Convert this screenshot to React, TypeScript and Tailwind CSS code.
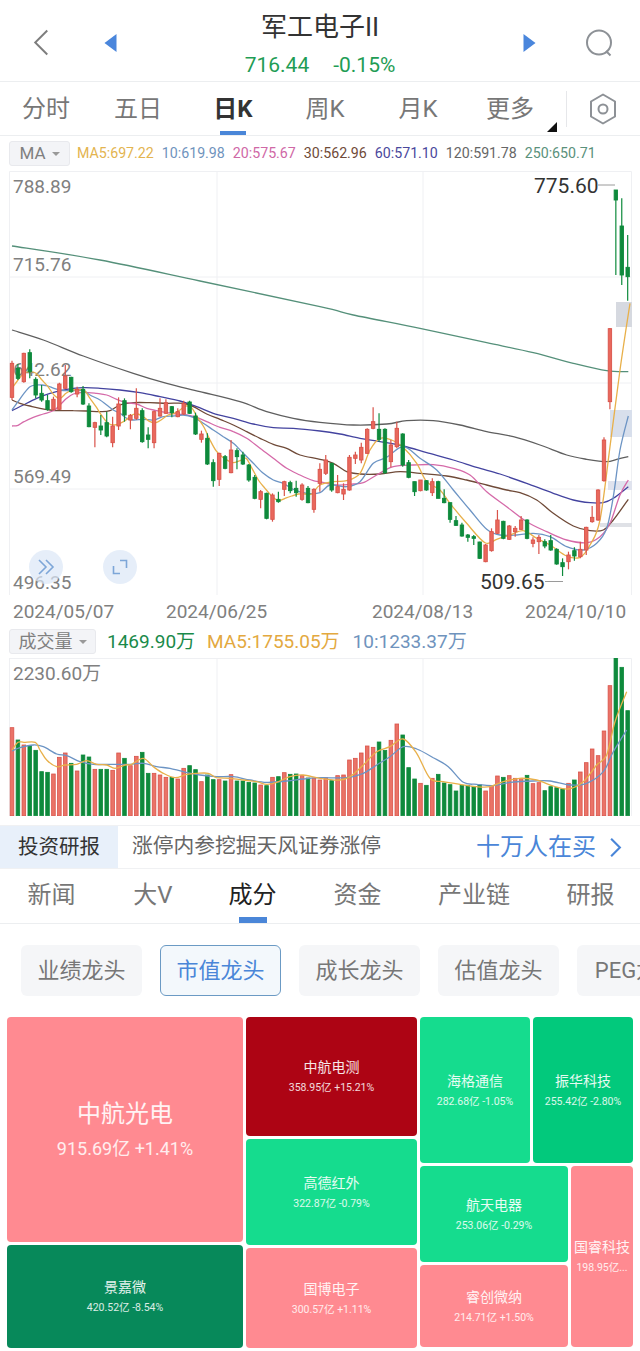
import React from "react";

type Candle = [string, number, number, number, number];
type Tile = { name: string; sub: string; bg: string; className: string };

// candle values are read off the 3x crops: colour, wick top, body top, body bottom, wick bottom
const leftCandles: Candle[] = [
  ["r", 62, 70, 172, 180], ["g", 72, 85, 115, 120], ["r", 38, 40, 125, 128], ["g", 28, 38, 95, 115],
  ["g", 112, 118, 165, 175], ["g", 135, 160, 180, 185], ["g", 165, 182, 208, 212], ["r", 170, 178, 208, 212],
  ["r", 128, 132, 208, 210], ["r", 75, 108, 145, 148], ["g", 110, 112, 155, 158], ["r", 140, 148, 162, 172],
  ["g", 138, 148, 192, 195], ["g", 190, 198, 260, 262], ["r", 245, 248, 262, 322], ["g", 225, 258, 270, 285],
  ["g", 215, 248, 288, 292], ["r", 230, 258, 308, 322], ["r", 172, 192, 258, 270], ["g", 175, 182, 225, 245],
  ["r", 222, 226, 240, 268], ["r", 145, 205, 235, 240], ["g", 205, 212, 305, 308], ["g", 262, 285, 298, 325],
  ["r", 212, 215, 308, 325], ["r", 175, 205, 228, 230], ["r", 178, 188, 220, 222], ["g", 198, 200, 218, 232],
  ["r", 205, 215, 230, 232], ["r", 182, 190, 222, 225], ["g", 182, 186, 220, 222], ["g", 218, 228, 282, 285],
  ["r", 272, 282, 298, 308], ["g", 280, 295, 372, 375], ["g", 358, 368, 422, 440], ["r", 338, 340, 418, 438],
  ["g", 345, 350, 385, 388], ["r", 300, 330, 398, 400], ["g", 325, 332, 350, 388], ["g", 335, 345, 372, 375],
  ["g", 372, 375, 420, 425], ["g", 405, 412, 475, 478], ["r", 450, 455, 478, 505], ["g", 458, 460, 535, 538],
  ["r", 460, 465, 538, 545], ["g", 455, 478, 485, 488], ["r", 422, 425, 448, 468], ["g", 422, 428, 452, 460],
  ["g", 422, 445, 458, 470], ["r", 430, 435, 478, 482], ["g", 438, 445, 488, 490], ["r", 445, 448, 508, 518],
];

const rightCandles: Candle[] = [
  ["r", 880, 898, 940, 965], ["r", 855, 870, 910, 915], ["g", 878, 880, 960, 965], ["r", 915, 950, 968, 970],
  ["r", 940, 958, 972, 990], ["r", 855, 862, 960, 962], ["r", 845, 855, 865, 882], ["r", 818, 832, 870, 880],
  ["r", 775, 778, 850, 852], ["r", 712, 755, 775, 778], ["g", 730, 778, 808, 815], ["g", 775, 778, 908, 912],
  ["r", 810, 825, 875, 892], ["r", 755, 775, 830, 835], ["g", 790, 792, 885, 890], ["g", 870, 878, 922, 925],
  ["g", 935, 935, 965, 978], ["r", 930, 930, 962, 964], ["g", 930, 932, 960, 962], ["r", 925, 935, 968, 978],
  ["g", 932, 935, 985, 985], ["g", 958, 985, 998, 1000], ["g", 998, 998, 1048, 1058], ["g", 1038, 1052, 1066, 1068],
  ["g", 1058, 1065, 1098, 1100], ["g", 1092, 1095, 1102, 1115], ["g", 1095, 1100, 1105, 1125], ["g", 1115, 1116, 1165, 1167],
  ["r", 1122, 1125, 1175, 1177], ["r", 1075, 1085, 1142, 1145], ["r", 1020, 1050, 1090, 1092], ["g", 1052, 1054, 1105, 1108],
  ["r", 1065, 1068, 1108, 1110], ["r", 1068, 1075, 1085, 1100], ["r", 1038, 1050, 1078, 1080], ["g", 1048, 1050, 1105, 1108],
  ["r", 1102, 1110, 1120, 1132], ["r", 1095, 1102, 1115, 1152], ["g", 1108, 1115, 1128, 1135], ["g", 1095, 1112, 1140, 1142],
  ["g", 1135, 1138, 1182, 1184], ["g", 1165, 1178, 1190, 1218], ["r", 1145, 1155, 1175, 1198], ["g", 1132, 1142, 1158, 1172],
  ["r", 1115, 1138, 1160, 1165], ["r", 1070, 1072, 1140, 1155], ["r", 1008, 1042, 1055, 1058], ["r", 958, 960, 1050, 1052],
  ["r", 802, 810, 932, 935], ["r", 475, 476, 695, 718], ["g", 60, 60, 90, 315], ["g", 85, 168, 315, 345],
  ["g", 195, 292, 320, 392],
];

const candleX = (i: number) => 12 + i * 5.92;

// left crop starts at y=340, right crop at x=320 y=170, all at 3x
const fromLeft = (pts: number[][]) => pts.map(([x, y]) => [x / 3, 340 + y / 3]);
const fromRight = (pts: number[][]) => pts.map(([x, y]) => [320 + x / 3, 170 + y / 3]);
const fromVolLeft = (pts: number[][]) => pts.map(([x, y]) => [x / 3, 625 + y / 3]);
const fromVolRight = (pts: number[][]) => pts.map(([x, y]) => [320 + x / 3, 625 + y / 3]);

const priceLines: { color: string; pts: number[][] }[] = [
  {
    color: "#55907a",
    pts: [[12, 246], [100, 260], [200, 281], ...fromRight([[0, 410], [100, 435], [300, 475], [500, 518], [640, 548], [760, 580], [860, 602], [925, 605]])],
  },
  {
    color: "#5f5f5f",
    pts: [[12, 330], ...fromLeft([[130, 0], [250, 48], [400, 100], [500, 130], [600, 155], [720, 185], [800, 215], [880, 235]]),
      ...fromRight([[0, 757], [100, 765], [200, 762], [260, 752], [340, 752], [420, 765], [500, 785], [580, 800], [660, 825], [740, 855], [800, 868], [860, 875], [890, 868], [925, 860]])],
  },
  {
    color: "#43439f",
    pts: [...fromLeft([[36, 212], [70, 195], [110, 175], [150, 160], [200, 148], [250, 143], [300, 145], [360, 150], [420, 158], [480, 170], [540, 183], [590, 200], [640, 220], [700, 235], [760, 252], [820, 263], [880, 265]]),
      ...fromRight([[0, 783], [60, 792], [120, 805], [180, 815], [250, 828], [320, 848], [400, 870], [470, 892], [540, 912], [620, 940], [700, 970], [760, 990], [810, 998], [850, 998], [880, 985], [925, 950]])],
  },
  {
    color: "#6f4a38",
    pts: [...fromLeft([[36, 180], [60, 190], [90, 198], [120, 205], [150, 210], [180, 212], [220, 212], [260, 213], [300, 215], [330, 212], [360, 195], [400, 188], [450, 188], [500, 190], [550, 190], [580, 200], [620, 222], [660, 238], [700, 255], [740, 275], [780, 295], [820, 313], [860, 325], [900, 345]]),
      ...fromRight([[0, 868], [40, 880], [80, 905], [120, 912], [180, 912], [240, 905], [300, 910], [380, 918], [440, 930], [500, 945], [560, 960], [600, 968], [650, 990], [700, 1030], [760, 1068], [810, 1082], [850, 1080], [880, 1050], [925, 988]])],
  },
  {
    color: "#d56aa9",
    pts: [...fromLeft([[36, 258], [54, 256], [72, 245], [100, 232], [130, 222], [160, 212], [180, 195], [200, 175], [220, 162], [250, 157], [290, 160], [320, 165], [350, 178], [380, 188], [410, 192], [440, 205], [470, 212], [500, 218], [530, 222], [560, 225], [590, 232], [620, 245], [660, 262], [700, 275], [740, 295], [780, 325], [820, 355], [860, 385], [900, 405], [940, 422]]),
      ...fromRight([[0, 935], [50, 945], [100, 942], [130, 938], [170, 915], [220, 890], [280, 885], [340, 884], [400, 895], [450, 915], [500, 965], [560, 1010], [620, 1055], [680, 1085], [740, 1110], [800, 1118], [840, 1100], [870, 1060], [900, 975], [925, 930]])],
  },
  {
    color: "#6c94c4",
    pts: [...fromLeft([[36, 210], [54, 185], [72, 160], [90, 140], [108, 135], [126, 135], [144, 138], [162, 145], [180, 150], [200, 152], [220, 152], [250, 152], [270, 165], [300, 180], [320, 195], [340, 210], [360, 220], [380, 235], [400, 240], [430, 238], [460, 240], [490, 230], [520, 228], [550, 225], [580, 232], [610, 250], [640, 270], [670, 290], [700, 310], [730, 340], [760, 370], [790, 400], [820, 420], [850, 430], [880, 448], [920, 460]]),
      ...fromRight([[0, 968], [30, 945], [80, 950], [120, 935], [160, 880], [200, 862], [250, 830], [300, 865], [350, 900], [400, 960], [450, 1020], [500, 1078], [540, 1095], [590, 1095], [640, 1090], [690, 1100], [740, 1130], [790, 1140], [830, 1120], [860, 1075], [880, 980], [900, 840], [925, 738]])],
  },
  {
    color: "#e8b04a",
    pts: [...fromLeft([[36, 145], [54, 120], [72, 100], [90, 95], [108, 100], [126, 120], [144, 140], [162, 165], [180, 175], [198, 160], [216, 150], [234, 150], [252, 150], [270, 175], [288, 200], [306, 228], [324, 250], [342, 255], [360, 250], [378, 240], [396, 225], [414, 222], [432, 232], [450, 245], [468, 248], [486, 238], [504, 225], [522, 220], [540, 210], [558, 198], [576, 205], [594, 235], [612, 262], [630, 300], [648, 332], [666, 350], [684, 362], [700, 368], [720, 362], [738, 355], [756, 385], [775, 420], [795, 445], [815, 468], [835, 482], [855, 475], [875, 468], [895, 462], [915, 462], [935, 462]]),
      ...fromRight([[0, 945], [40, 935], [80, 932], [120, 910], [150, 840], [180, 805], [215, 810], [248, 830], [290, 880], [320, 935], [360, 960], [390, 1000], [440, 1060], [495, 1118], [530, 1108], [570, 1095], [610, 1082], [650, 1105], [690, 1125], [740, 1158], [780, 1162], [810, 1125], [840, 1050], [870, 830], [900, 600], [930, 400]])],
  },
];

const volumes: [string, number][] = [
  ["r", 308], ["g", 345], ["r", 360], ["g", 362], ["g", 376], ["g", 440], ["g", 442], ["r", 447], ["r", 397], ["r", 384],
  ["g", 415], ["r", 438], ["g", 390], ["g", 396], ["r", 433], ["g", 433], ["g", 433], ["r", 436], ["r", 384], ["g", 400],
  ["r", 422], ["r", 394], ["g", 382], ["g", 445], ["r", 445], ["r", 450], ["r", 457], ["g", 457], ["r", 462], ["r", 430],
  ["g", 422], ["g", 434], ["r", 470], ["g", 450], ["g", 464], ["r", 464], ["g", 468], ["r", 449], ["g", 468], ["g", 468],
  ["g", 472], ["g", 474], ["r", 480], ["g", 482], ["r", 457], ["g", 455], ["r", 443], ["g", 448], ["g", 447], ["r", 452],
  ["g", 459], ["r", 460], ["r", 465], ["r", 458], ["g", 467], ["r", 452], ["r", 450], ["r", 405], ["r", 400], ["r", 384],
  ["r", 363], ["r", 367], ["g", 351], ["g", 376], ["r", 346], ["r", 297], ["g", 330], ["g", 428], ["g", 462], ["r", 475],
  ["g", 481], ["r", 460], ["g", 448], ["g", 474], ["g", 479], ["g", 498], ["g", 481], ["g", 481], ["g", 484], ["g", 479],
  ["r", 498], ["r", 484], ["r", 453], ["g", 457], ["r", 452], ["r", 460], ["r", 460], ["g", 451], ["r", 476], ["r", 473],
  ["g", 497], ["g", 485], ["g", 488], ["g", 492], ["r", 475], ["g", 465], ["r", 441], ["r", 413], ["r", 372], ["r", 392],
  ["r", 318], ["r", 182], ["g", 97], ["g", 127], ["g", 257],
];

const volumeLines = [
  {
    color: "#6c94c4",
    pts: [...fromVolLeft([[36, 378], [60, 368], [100, 360], [130, 365], [170, 387], [200, 392], [240, 410], [280, 418], [340, 418], [390, 418], [430, 415], [470, 425], [510, 430], [550, 440], [600, 450], [650, 455], [700, 455], [750, 465], [800, 472], [860, 468], [910, 462]]),
      ...fromVolRight([[0, 458], [80, 458], [130, 445], [170, 420], [210, 395], [250, 365], [290, 372], [340, 398], [385, 425], [430, 472], [470, 478], [520, 482], [570, 472], [640, 468], [690, 468], [750, 480], [800, 475], [850, 440], [880, 380], [920, 315]])],
  },
  {
    color: "#e8b04a",
    pts: [...fromVolLeft([[36, 375], [54, 352], [72, 352], [106, 352], [120, 375], [140, 405], [170, 425], [195, 420], [230, 418], [260, 407], [290, 418], [320, 420], [345, 430], [375, 420], [395, 418], [430, 400], [460, 425], [490, 445], [525, 458], [560, 448], [590, 445], [625, 445], [650, 458], [690, 460], [730, 465], [770, 470], [800, 478], [830, 472], [870, 455], [910, 450]]),
      ...fromVolRight([[0, 460], [60, 465], [90, 455], [130, 420], [170, 380], [210, 365], [250, 342], [290, 385], [330, 460], [370, 470], [420, 478], [470, 485], [510, 485], [550, 470], [600, 460], [650, 465], [700, 483], [745, 492], [790, 470], [830, 420], [860, 390], [885, 290], [920, 200]])],
  },
];

const topTabs = [
  { text: "分时", className: "w-[92px]" },
  { text: "五日", className: "w-[92px]" },
  { text: "日K", className: "w-[98px]" },
  { text: "周K", className: "w-[86px]" },
  { text: "月K", className: "w-[100px]" },
  { text: "更多", className: "w-[84px]" },
];
const maValues = [
  { text: "MA5:697.22", className: "text-[#e3b44f]" },
  { text: "10:619.98", className: "text-[#6f93bd]" },
  { text: "20:575.67", className: "text-[#cf68a6]" },
  { text: "30:562.96", className: "text-[#6f4a38]" },
  { text: "60:571.10", className: "text-[#4a479c]" },
  { text: "120:591.78", className: "text-[#666666]" },
  { text: "250:650.71", className: "text-[#5a917b]" },
];
const infoTabs = [
  { text: "新闻", className: "w-[47px] ml-[28px]" },
  { text: "大V", className: "w-[40px] ml-[58px]" },
  { text: "成分", className: "w-[47px] ml-[56px]" },
  { text: "资金", className: "w-[47px] ml-[58px]" },
  { text: "产业链", className: "w-[72px] ml-[57px]" },
  { text: "研报", className: "w-[47px] ml-[57px]" },
];
const pills = ["业绩龙头", "市值龙头", "成长龙头", "估值龙头"];

const PINK = "bg-[#ff8a91]";
const GREEN = "bg-[#15dc8e]";

function smoothPath(pts: number[][]) {
  let d = `M${pts[0][0].toFixed(1)} ${pts[0][1].toFixed(1)}`;
  for (let i = 0; i < pts.length - 1; i++) {
    const p0 = pts[Math.max(i - 1, 0)];
    const p1 = pts[i];
    const p2 = pts[i + 1];
    const p3 = pts[Math.min(i + 2, pts.length - 1)];
    const c1x = p1[0] + (p2[0] - p0[0]) / 6;
    const c1y = p1[1] + (p2[1] - p0[1]) / 6;
    const c2x = p2[0] - (p3[0] - p1[0]) / 6;
    const c2y = p2[1] - (p3[1] - p1[1]) / 6;
    d += `C${c1x.toFixed(1)} ${c1y.toFixed(1)} ${c2x.toFixed(1)} ${c2y.toFixed(1)} ${p2[0].toFixed(1)} ${p2[1].toFixed(1)}`;
  }
  return d;
}

function PriceChart() {
  return (
    <svg viewBox="0 171 640 424" className="relative block h-[424px] w-[640px]" fill="none">
      <path d="M9.5 171.5H631.5V595.5H9.5ZM9.5 277H631.5M9.5 383H631.5M9.5 489H631.5M217 171V595M423 171V595" stroke="#eff0f3" />
      <rect x="616" y="302" width="16" height="25" fill="#d6d9e0" />
      <rect x="610" y="410" width="22" height="27" fill="#d8dfec" />
      <rect x="608" y="481" width="24" height="9" fill="#e0e3ee" />
      <rect x="600" y="523" width="32" height="4" fill="#dfe1e6" />
      {priceLines.map((line) => (
        <path key={line.color} d={smoothPath(line.pts)} stroke={line.color} strokeWidth="1.3" />
      ))}
      {leftCandles.concat(rightCandles).map(([c, wt, bt, bb, wb], i) => {
        const x = candleX(i);
        const base = i < leftCandles.length ? 340 : 170;
        const y = (v: number) => base + v / 3;
        const stroke = c === "r" ? "#d9534a" : "#0e8a3c";
        const fill = c === "r" ? "#e9685c" : "#0e8a3c";
        return (
          <g key={i}>
            <line x1={x} x2={x} y1={y(wt)} y2={y(wb)} stroke={stroke} strokeWidth="1.2" />
            <rect x={x - 1.7} y={y(bt)} width="3.4" height={Math.max(y(bb) - y(bt), 1)} fill={fill} stroke={stroke} strokeWidth="0.9" />
          </g>
        );
      })}
      <path d="M598 185H615M545 581.5H563" stroke="#9a9a9a" />
    </svg>
  );
}

function VolumeChart() {
  return (
    <svg viewBox="0 658 640 158" className="relative block h-[158px] w-[640px]" fill="none">
      <path d="M9.5 658.5H631.5V816M9.5 658V816M217 658V816M423 658V816" stroke="#eff0f3" />
      {volumes.map(([c, top], i) => {
        const y = 625 + top / 3;
        return (
          <rect
            key={i}
            x={candleX(i) - 1.8}
            y={y}
            width="3.6"
            height={815.7 - y}
            fill={c === "r" ? "#ea7367" : "#0e8a3c"}
            stroke={c === "r" ? "#d9534a" : "#0e8a3c"}
            strokeWidth="0.8"
          />
        );
      })}
      {volumeLines.map((line) => (
        <path key={line.color} d={smoothPath(line.pts)} stroke={line.color} strokeWidth="1.3" />
      ))}
    </svg>
  );
}

function Header() {
  return (
    <div className="flex h-[82px] items-center border-b border-[#eceef0] pt-[4px]">
      <svg viewBox="0 0 16 28" className="ml-[33px] h-[27px] w-[16px]" fill="none">
        <path d="M14.5 1.5 2 14l12.5 12.5" stroke="#7d7d7d" strokeWidth="2" />
      </svg>
      <svg viewBox="0 0 12 18" className="ml-[55px] h-[18px] w-[13px]">
        <path d="M12 0v18L0 9z" fill="#4a86dc" />
      </svg>
      <div className="flex w-[406px] flex-col items-center">
        <div className="mt-[2px] text-[26px] leading-[34px] text-[#333333]">军工电子II</div>
        <div className="mt-[9px] flex gap-[24px] text-[21px] leading-[24px] text-[#1f9d55]">
          <span>716.44</span>
          <span>-0.15%</span>
        </div>
      </div>
      <svg viewBox="0 0 12 18" className="h-[18px] w-[13px]">
        <path d="M0 0v18L12 9z" fill="#4a86dc" />
      </svg>
      <svg viewBox="0 0 28 28" className="ml-[49px] h-[28px] w-[28px]" fill="none">
        <circle cx="14" cy="13.5" r="12" stroke="#8d9196" strokeWidth="2" />
        <path d="M21 22l4.5 4.5" stroke="#8d9196" strokeWidth="2" />
      </svg>
    </div>
  );
}

function PeriodTabs() {
  return (
    <div className="relative flex h-[54px] items-center border-b border-[#eceef0]">
      {topTabs.map((tab) => (
        <div
          key={tab.text}
          className={
            tab.text === "日K"
              ? `relative flex h-full items-center justify-center text-[24px] font-bold text-[#333333] ${tab.className}`
              : `flex h-full items-center justify-center text-[24px] text-[#777777] ${tab.className}`
          }
        >
          {tab.text}
          {tab.text === "日K" && <span className="absolute bottom-0 h-[4px] w-[26px] bg-[#4a86d8]" />}
        </div>
      ))}
      <svg viewBox="0 0 10 10" className="absolute left-[547px] top-[40px] h-[10px] w-[10px]">
        <path d="M10 0v10H0z" fill="#111111" />
      </svg>
      <div className="ml-[14px] h-[36px] w-px bg-[#e6e7ea]" />
      <svg viewBox="0 0 28 32" className="ml-[22px] h-[32px] w-[28px]" fill="none">
        <path d="M14 1.5 26 8.5v15L14 30.5 2 23.5v-15z" stroke="#8d9196" strokeWidth="2" strokeLinejoin="round" />
        <circle cx="14" cy="16" r="4.5" stroke="#8d9196" strokeWidth="2" />
      </svg>
    </div>
  );
}

function MaRow() {
  return (
    <div className="flex h-[35px] items-center pl-[9px]">
      <div className="flex h-[25px] w-[61px] items-center justify-center gap-[6px] rounded-[3px] border border-[#e8e9ed] bg-[#f3f4f7] text-[17px] text-[#808080]">
        MA
        <span className="h-0 w-0 border-x-[4px] border-t-[4px] border-x-transparent border-t-[#999999]" />
      </div>
      <div className="ml-[7px] flex gap-[8px] whitespace-nowrap text-[14.2px] leading-[25px]">
        {maValues.map((v) => (
          <span key={v.text} className={v.className}>
            {v.text}
          </span>
        ))}
      </div>
    </div>
  );
}

function CircleButton({ className, children }: { className: string; children: React.ReactNode }) {
  return (
    <div className={`absolute top-[379px] flex h-[34px] w-[34px] items-center justify-center rounded-full bg-[#dbe7f7]/70 ${className}`}>
      {children}
    </div>
  );
}

function TreeTile({ tile }: { tile: Tile }) {
  return (
    <div className={`flex flex-col items-center justify-center overflow-hidden rounded-[4px] ${tile.bg} ${tile.className}`}>
      <div className="whitespace-nowrap text-[14px] leading-[20px] text-white/90">{tile.name}</div>
      <div className="mt-[3px] whitespace-nowrap text-[10.5px] leading-[16px] text-white/85">{tile.sub}</div>
    </div>
  );
}

function TreeMap() {
  return (
    <div className="mt-[21px] flex gap-[3px] pl-[7px]">
      <div className="flex w-[236px] flex-col gap-[3px]">
        <div className={`flex h-[225px] flex-col items-center justify-center rounded-[4px] pb-[1px] ${PINK}`}>
          <div className="text-[24px] leading-[32px] text-white/90">中航光电</div>
          <div className="mt-[7px] text-[18px] leading-[24px] text-white/85">915.69亿 +1.41%</div>
        </div>
        <TreeTile tile={{ name: "景嘉微", sub: "420.52亿 -8.54%", bg: "bg-[#07895a]", className: "h-[103px]" }} />
      </div>
      <div className="flex w-[171px] flex-col gap-[3px]">
        <TreeTile tile={{ name: "中航电测", sub: "358.95亿 +15.21%", bg: "bg-[#ad0414]", className: "h-[119px]" }} />
        <TreeTile tile={{ name: "高德红外", sub: "322.87亿 -0.79%", bg: GREEN, className: "h-[106px]" }} />
        <TreeTile tile={{ name: "国博电子", sub: "300.57亿 +1.11%", bg: PINK, className: "h-[100px]" }} />
      </div>
      <div className="flex w-[213px] flex-col gap-[3px]">
        <div className="flex h-[146px] gap-[3px]">
          <TreeTile tile={{ name: "海格通信", sub: "282.68亿 -1.05%", bg: GREEN, className: "w-[110px]" }} />
          <TreeTile tile={{ name: "振华科技", sub: "255.42亿 -2.80%", bg: "bg-[#02c97c]", className: "w-[100px]" }} />
        </div>
        <div className="flex h-[181px] gap-[3px]">
          <div className="flex w-[148px] flex-col gap-[3px]">
            <TreeTile tile={{ name: "航天电器", sub: "253.06亿 -0.29%", bg: GREEN, className: "h-[96px]" }} />
            <TreeTile tile={{ name: "睿创微纳", sub: "214.71亿 +1.50%", bg: PINK, className: "h-[82px]" }} />
          </div>
          <TreeTile tile={{ name: "国睿科技", sub: "198.95亿...", bg: PINK, className: "w-[62px]" }} />
        </div>
      </div>
    </div>
  );
}

export default function App() {
  return (
    <div className="h-[1351px] w-[640px] overflow-hidden bg-white font-['Roboto','Noto_Sans_CJK_SC',sans-serif]">
      <Header />
      <PeriodTabs />
      <MaRow />

      <div className="relative h-[424px]">
        <span className="absolute left-[13px] top-[2px] text-[19px] leading-[28px] text-[#808080]">788.89</span>
        <span className="absolute left-[13px] top-[80px] text-[19px] leading-[28px] text-[#808080]">715.76</span>
        <span className="absolute left-[13px] top-[185px] text-[19px] leading-[28px] text-[#808080]">642.62</span>
        <span className="absolute left-[13px] top-[292px] text-[19px] leading-[28px] text-[#808080]">569.49</span>
        <span className="absolute left-[13px] top-[398px] text-[19px] leading-[28px] text-[#808080]">496.35</span>
        <PriceChart />
        <span className="absolute left-[534px] top-[1px] text-[21px] leading-[28px] text-[#333333]">775.60</span>
        <span className="absolute left-[480px] top-[397px] text-[21px] leading-[28px] text-[#333333]">509.65</span>
        <CircleButton className="left-[29px]">
          <svg viewBox="0 0 18 16" className="h-[16px] w-[18px]" fill="none">
            <path d="M2 1l7 7-7 7M9 1l7 7-7 7" stroke="#7da6d8" strokeWidth="1.6" />
          </svg>
        </CircleButton>
        <CircleButton className="left-[103px]">
          <svg viewBox="0 0 16 16" className="h-[16px] w-[16px]" fill="none">
            <path d="M1.5 7v7.5H8M8 1.5h6.5V9" stroke="#7da6d8" strokeWidth="1.6" />
          </svg>
        </CircleButton>
      </div>

      <div className="flex h-[30px] items-center pt-[3px] text-[19px] leading-[27px] text-[#808080]">
        <span className="ml-[13px] w-[153px]">2024/05/07</span>
        <span className="w-[206px]">2024/06/25</span>
        <span className="w-[153px]">2024/08/13</span>
        <span>2024/10/10</span>
      </div>

      <div className="flex h-[33px] items-center pl-[9px] text-[19px] leading-[24px]">
        <div className="flex h-[25px] w-[87px] items-center justify-center gap-[6px] rounded-[3px] border border-[#e8e9ed] bg-[#f3f4f7] text-[18px] text-[#808080]">
          成交量
          <span className="h-0 w-0 border-x-[4px] border-t-[4px] border-x-transparent border-t-[#999999]" />
        </div>
        <span className="ml-[11px] whitespace-nowrap text-[#1a8a4a]">1469.90万</span>
        <span className="ml-[12px] whitespace-nowrap text-[#e3a93f]">MA5:1755.05万</span>
        <span className="ml-[13px] whitespace-nowrap text-[#6f93bd]">10:1233.37万</span>
      </div>

      <div className="relative h-[158px]">
        <span className="absolute left-[13px] top-[2px] text-[19px] leading-[28px] text-[#808080]">2230.60万</span>
        <VolumeChart />
      </div>

      <div className="mt-[9px] flex h-[44px] items-center border-y border-[#f0f1f3]">
        <div className="flex h-full w-[118px] items-center justify-center bg-[#e8f0fa] text-[20.5px] text-[#333333]">投资研报</div>
        <div className="ml-[14px] w-[344px] whitespace-nowrap text-[20.75px] text-[#666666]">涨停内参挖掘天风证券涨停</div>
        <div className="whitespace-nowrap text-[24px] text-[#4a86d8]">十万人在买</div>
        <svg viewBox="0 0 14 24" className="ml-[13px] h-[21px] w-[13px]" fill="none">
          <path d="M2 2l10 10L2 22" stroke="#4a86d8" strokeWidth="2.4" />
        </svg>
      </div>

      <div className="flex h-[55px] items-center border-b border-[#eceef0] text-[24px]">
        {infoTabs.map((tab) => (
          <div
            key={tab.text}
            className={
              tab.text === "成分"
                ? `relative flex h-full items-center justify-center whitespace-nowrap pb-[3px] text-[#222222] ${tab.className}`
                : `flex h-full items-center justify-center whitespace-nowrap pb-[3px] text-[#777777] ${tab.className}`
            }
          >
            {tab.text}
            {tab.text === "成分" && <span className="absolute bottom-0 h-[6px] w-[28px] bg-[#4a86d8]" />}
          </div>
        ))}
      </div>

      <div className="mt-[21px] flex gap-[18px] whitespace-nowrap pl-[21px]">
        {pills.map((pill) => (
          <div
            key={pill}
            className={
              pill === "市值龙头"
                ? "flex h-[51px] w-[121px] shrink-0 items-center justify-center rounded-[6px] border border-[#6b9ac4] bg-[#f3f8fc] text-[22px] text-[#4a86d8]"
                : "flex h-[51px] w-[121px] shrink-0 items-center justify-center rounded-[6px] bg-[#f5f6f8] text-[22px] text-[#777777]"
            }
          >
            {pill}
          </div>
        ))}
        <div className="flex h-[51px] w-[121px] shrink-0 items-center justify-center rounded-[6px] bg-[#f5f6f8] text-[22px] text-[#777777]">
          PEG龙头
        </div>
      </div>

      <TreeMap />
    </div>
  );
}
